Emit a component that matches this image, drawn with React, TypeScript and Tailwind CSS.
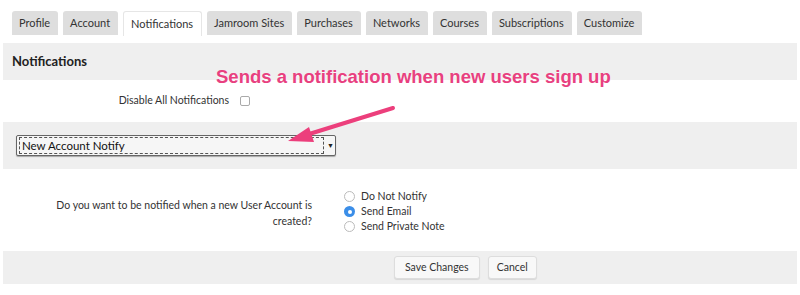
import React from "react";

const tabs = ["Profile", "Account", "Notifications", "Jamroom Sites", "Purchases", "Networks", "Courses", "Subscriptions", "Customize"];

export default function App() {
  return (
    <div className="relative w-[800px] h-[295px] bg-white overflow-hidden text-[10.5px] text-[#333]" style={{ fontFamily: "Lato, 'Open Sans', sans-serif" }}>
      <div className="flex gap-[5px] pl-[12px] pt-[11px] h-[35px] text-[11px]">
        {tabs.map((t) => (
          <div
            key={t}
            className={`h-[24px] pl-[7px] pr-[8px] flex items-center rounded-t-[3px] ${t === "Notifications" ? "bg-white border border-b-0 border-[#e6e6e6] h-[25px]" : "bg-[#dedede]"}`}
          >
            {t}
          </div>
        ))}
      </div>
      <div className="mx-[3px] mt-[8px] h-[37px] bg-[#efefef] flex items-center pl-[9px] font-bold text-[13px] text-[#222]">
        Notifications
      </div>
      <div className="flex items-center h-[42px]">
        <div className="w-[229px] text-right">Disable All Notifications</div>
        <div className="ml-[11px] w-[10px] h-[10px] border border-[#aaa] rounded-[2px] bg-white" />
      </div>
      <div className="mx-[3px] h-[47px] bg-[#efefef] flex items-center pl-[13px]">
        <div className="w-[320px] h-[21px] bg-[#f6f6f6] border border-[#666] rounded-[2px] flex items-center shadow-[0_1px_1px_rgba(0,0,0,0.3)]">
          <div className="flex-1 h-[17px] mx-[2px] border border-dashed border-[#555] flex items-center pl-[2px] text-[11.5px] text-[#111]">New Account Notify</div>
          <div className="w-[9px] flex justify-center text-[7px] text-[#222]">▼</div>
        </div>
      </div>
      <div className="flex h-[82px] pt-[21px]">
        <div className="w-[312px] text-right leading-[16px] pt-[7px]">
          Do you want to be notified when a new User Account is<br />created?
        </div>
        <div className="ml-[32px] flex flex-col gap-[2px]">
          {["Do Not Notify", "Send Email", "Send Private Note"].map((o, i) => (
            <div key={o} className="flex items-center h-[13px] leading-[13px]">
              {i === 1 ? (
                <div className="w-[11px] h-[11px] rounded-full bg-[#3b8ee8] flex items-center justify-center">
                  <div className="w-[4px] h-[4px] rounded-full bg-white" />
                </div>
              ) : (
                <div className="w-[11px] h-[11px] rounded-full border border-[#bbb] bg-white" />
              )}
              <span className="ml-[6px]">{o}</span>
            </div>
          ))}
        </div>
      </div>
      <div className="mx-[3px] h-[33px] bg-[#efefef] flex items-center gap-[8px] pl-[391px]">
        <div className="h-[23px] px-[10px] flex items-center bg-[#f8f8f8] border border-[#ddd] rounded-[3px] shadow-[0_1px_1px_rgba(0,0,0,0.1)]">Save Changes</div>
        <div className="h-[23px] px-[8px] flex items-center bg-[#f8f8f8] border border-[#ddd] rounded-[3px] shadow-[0_1px_1px_rgba(0,0,0,0.1)]">Cancel</div>
      </div>
      <div
        className="absolute left-[216px] top-[66px] text-[18.5px] font-bold text-[#e8407f] leading-[22px] whitespace-nowrap"
        style={{ fontFamily: "'Liberation Sans', Arial, sans-serif", textShadow: "0 1px 2px rgba(255,255,255,0.9)" }}
      >
        Sends a notification when new users sign up
      </div>
      <svg className="absolute left-0 top-0" width="800" height="295" viewBox="0 0 800 295">
        <path d="M393 108 L306 135" stroke="#ec3f7c" strokeWidth="4" strokeLinecap="round" fill="none" />
        <path d="M288 141 L309 127 L314 142 Z" fill="#ec3f7c" />
      </svg>
    </div>
  );
}
